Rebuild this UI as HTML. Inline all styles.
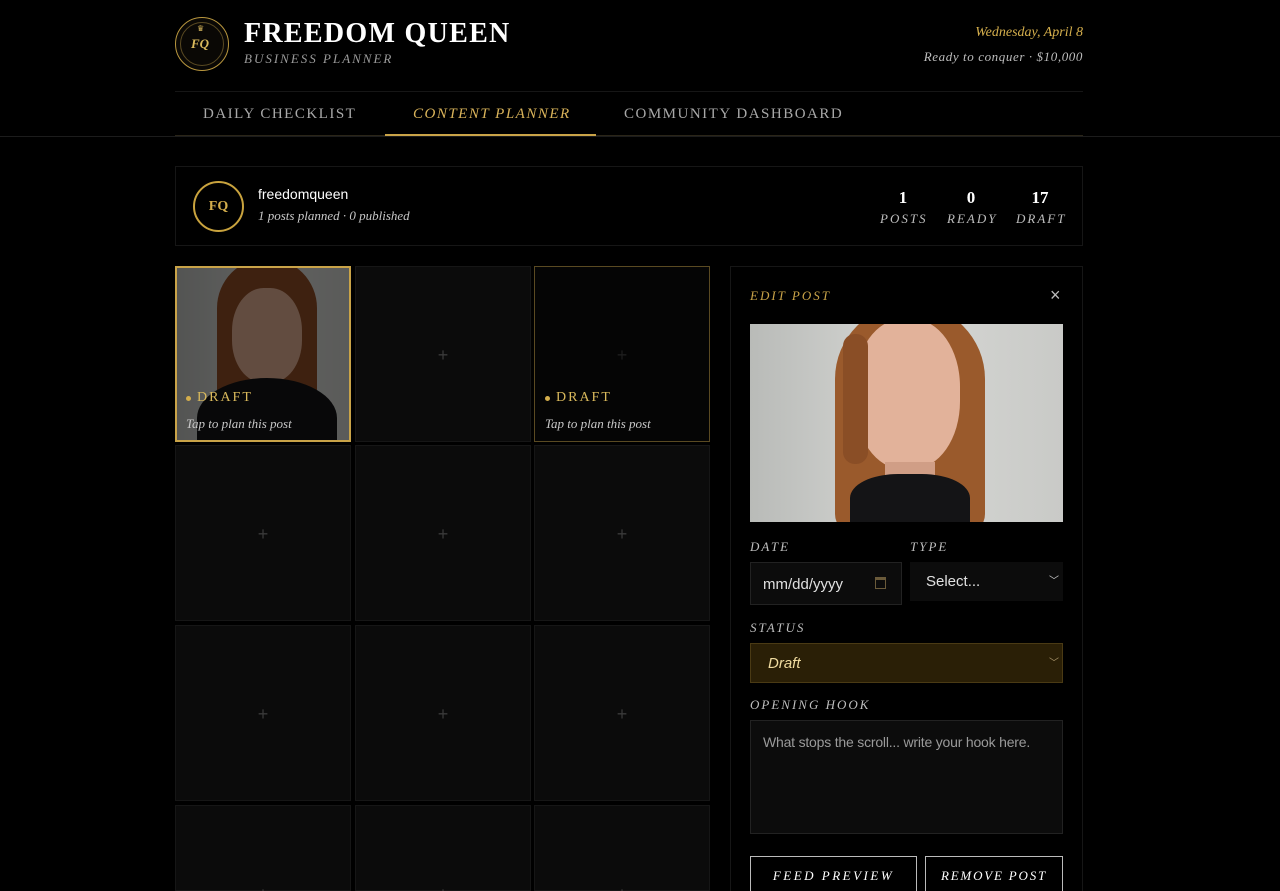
<!DOCTYPE html>
<html style="height:891px;overflow:hidden"><head><meta charset="utf-8"><style>
*{box-sizing:border-box;margin:0;padding:0}
body{width:1280px;height:891px;overflow:hidden;background:#000;font-family:"Liberation Serif",serif;color:#fff;position:relative}
.a{position:absolute}
.it{font-style:italic}
.cell{position:absolute;width:176px;height:176px;background:#0b0b0b;border:1px solid #161616}
.plus{position:absolute;left:0;right:0;top:78px;text-align:center;color:#3a3a3a;font-family:"Liberation Sans",sans-serif;font-size:18px}
.lbl{position:absolute;font-style:italic;font-size:13px;letter-spacing:2px;color:#bdbdbd}
.sans{font-family:"Liberation Sans",sans-serif}
.photo{background:linear-gradient(90deg,#b9bbb8,#d6d7d4 50%,#c9cac7)}
</style></head><body>
<!-- header -->
<div class="a" style="left:175px;top:17px;width:54px;height:54px;border-radius:50%;border:1px solid #b8963e;background:#0a0805"></div>
<div class="a" style="left:180px;top:22px;width:44px;height:44px;border-radius:50%;border:1px solid #5a4a22"></div>
<div class="a it" style="left:191px;top:36px;color:#d9b95c;font-size:13px;font-weight:bold">FQ</div>
<div class="a" style="left:197px;top:24px;color:#d9b95c;font-size:8px">♛</div>
<div class="a" style="left:244px;top:18px;font-size:28px;font-weight:bold;letter-spacing:1.3px">FREEDOM QUEEN</div>
<div class="a it" style="left:244px;top:51px;font-size:13px;letter-spacing:2px;color:#9a9a9a">BUSINESS PLANNER</div>
<div class="a it" style="right:197px;top:25px;font-size:14px;color:#d4ae4c">Wednesday, April 8</div>
<div class="a it" style="right:197px;top:49px;font-size:13px;letter-spacing:0.6px;color:#bdbdbd">Ready to conquer · $10,000</div>
<div class="a" style="left:175px;top:91px;width:908px;height:1px;background:#161616"></div>
<div class="a" style="left:203px;top:106px;font-size:15px;letter-spacing:1.5px;color:#a8a8a8">DAILY CHECKLIST</div>
<div class="a it" style="left:413px;top:106px;font-size:15px;letter-spacing:1.5px;color:#d9b35a">CONTENT PLANNER</div>
<div class="a" style="left:624px;top:106px;font-size:15px;letter-spacing:1.5px;color:#a8a8a8">COMMUNITY DASHBOARD</div>
<div class="a" style="left:0;top:136px;width:1280px;height:1px;background:#1c1c1c"></div>
<div class="a" style="left:175px;top:135px;width:908px;height:1px;background:#2a2518"></div>
<div class="a" style="left:385px;top:134px;width:211px;height:2px;background:#c9a348"></div>
<!-- profile -->
<div class="a" style="left:175px;top:166px;width:908px;height:80px;border:1px solid #161616"></div>
<div class="a" style="left:193px;top:181px;width:51px;height:51px;border-radius:50%;border:2px solid #c9a33e"></div>
<div class="a" style="left:193px;top:199px;width:51px;text-align:center;font-size:14px;font-weight:bold;color:#d4ae4c">FQ</div>
<div class="a sans" style="left:258px;top:186px;font-size:14px">freedomqueen</div>
<div class="a it" style="left:258px;top:208px;font-size:13px;color:#c8c8c8">1 posts planned · 0 published</div>
<div class="a" style="left:880px;top:188px;width:46px;text-align:center;font-size:17px;font-weight:bold">1</div>
<div class="lbl" style="left:880px;top:211px">POSTS</div>
<div class="a" style="left:947px;top:188px;width:48px;text-align:center;font-size:17px;font-weight:bold">0</div>
<div class="lbl" style="left:947px;top:211px">READY</div>
<div class="a" style="left:1016px;top:188px;width:48px;text-align:center;font-size:17px;font-weight:bold">17</div>
<div class="lbl" style="left:1016px;top:211px">DRAFT</div>
<!-- grid -->
<div class="cell" style="left:175px;top:266px;border:2px solid #c9a348;overflow:hidden">
 <div class="a photo" style="inset:0;filter:brightness(.45)">
  <div class="a" style="left:40px;top:-10px;width:100px;height:170px;border-radius:50px 50px 10px 10px;background:#8a4a24"></div>
  <div class="a" style="left:55px;top:20px;width:70px;height:95px;border-radius:45%;background:#d9a88e"></div>
  <div class="a" style="left:20px;top:110px;width:140px;height:80px;border-radius:50% 50% 0 0;background:#121214"></div>
 </div>
 <div class="a" style="left:9px;top:128px;width:5px;height:5px;border-radius:50%;background:#d4ae4c"></div>
 <div class="a" style="left:20px;top:122px;font-size:14px;letter-spacing:2px;color:#d9b95c">DRAFT</div>
 <div class="a it" style="left:9px;top:148px;font-size:13px;color:#c8c8c8">Tap to plan this post</div>
</div>
<div class="cell" style="left:355px;top:266px"><div class="plus">+</div></div>
<div class="cell" style="left:534px;top:266px;background:#050505;border:1px solid #5a4a22"><div class="plus" style="color:#1e1e1e">+</div>
 <div class="a" style="left:10px;top:129px;width:5px;height:5px;border-radius:50%;background:#d4ae4c"></div>
 <div class="a" style="left:21px;top:123px;font-size:14px;letter-spacing:2px;color:#d9b95c">DRAFT</div>
 <div class="a it" style="left:10px;top:149px;font-size:13px;color:#c8c8c8">Tap to plan this post</div>
</div>
<div class="cell" style="left:175px;top:445px"><div class="plus">+</div></div>
<div class="cell" style="left:355px;top:445px"><div class="plus">+</div></div>
<div class="cell" style="left:534px;top:445px"><div class="plus">+</div></div>
<div class="cell" style="left:175px;top:625px"><div class="plus">+</div></div>
<div class="cell" style="left:355px;top:625px"><div class="plus">+</div></div>
<div class="cell" style="left:534px;top:625px"><div class="plus">+</div></div>
<div class="cell" style="left:175px;top:805px;height:86px"><div class="plus">+</div></div>
<div class="cell" style="left:355px;top:805px;height:86px"><div class="plus">+</div></div>
<div class="cell" style="left:534px;top:805px;height:86px"><div class="plus">+</div></div>
<!-- panel -->
<div class="a" style="left:730px;top:266px;width:353px;height:625px;border:1px solid #161616;border-bottom:none"></div>
<div class="a it" style="left:750px;top:288px;font-size:13px;letter-spacing:2px;color:#c9a348">EDIT POST</div>
<div class="a sans" style="left:1050px;top:285px;font-size:18px;color:#bbb">×</div>
<div class="a photo" style="left:750px;top:324px;width:313px;height:198px;overflow:hidden">
 <div class="a" style="left:85px;top:-20px;width:150px;height:230px;border-radius:75px 75px 20px 20px;background:#9a5a2c"></div>
 <div class="a" style="left:105px;top:-5px;width:105px;height:150px;border-radius:45%;background:#e2b29a"></div>
 <div class="a" style="left:93px;top:10px;width:25px;height:130px;border-radius:12px;background:#8a4e26"></div>
 <div class="a" style="left:135px;top:138px;width:50px;height:40px;background:#d09e86"></div>
 <div class="a" style="left:100px;top:150px;width:120px;height:60px;border-radius:40% 40% 0 0;background:#141416"></div>
</div>
<div class="lbl" style="left:750px;top:539px">DATE</div>
<div class="lbl" style="left:910px;top:539px">TYPE</div>
<div class="a sans" style="left:750px;top:562px;width:152px;height:43px;background:#0c0c0c;border:1px solid #222;padding:13px 12px;font-size:15px;color:#e0e0e0">mm/dd/yyyy</div>
<div class="a" style="left:875px;top:577px;width:11px;height:12px;border:1px solid #6a5a3a;border-top-width:3px"></div>
<div class="a sans" style="left:910px;top:562px;width:153px;height:39px;background:#0c0c0c;padding:11px 16px;font-size:15px;color:#e0e0e0">Select...</div>
<div class="a sans" style="left:1049px;top:572px;font-size:10px;color:#ccc">﹀</div>
<div class="lbl" style="left:750px;top:620px">STATUS</div>
<div class="a sans it" style="left:750px;top:643px;width:313px;height:40px;background:#2a1f06;border:1px solid #4a3a14;padding:11px 17px;font-size:15px;color:#f0dca0">Draft</div>
<div class="a sans" style="left:1049px;top:654px;font-size:10px;color:#a8946a">﹀</div>
<div class="lbl" style="left:750px;top:697px">OPENING HOOK</div>
<div class="a sans" style="left:750px;top:720px;width:313px;height:114px;background:#0c0c0c;border:1px solid #222;padding:13px 12px;font-size:14px;letter-spacing:-0.2px;white-space:nowrap;color:#9a9a9a">What stops the scroll... write your hook here.</div>
<div class="a" style="left:750px;top:856px;width:167px;height:40px;border:1px solid #bbb;text-align:center;padding-top:11px;font-style:italic;font-size:13px;letter-spacing:2.5px">FEED PREVIEW</div>
<div class="a" style="left:925px;top:856px;width:138px;height:40px;border:1px solid #bbb;text-align:center;padding-top:11px;font-style:italic;font-size:13px;letter-spacing:1.8px">REMOVE POST</div>
</body></html>
